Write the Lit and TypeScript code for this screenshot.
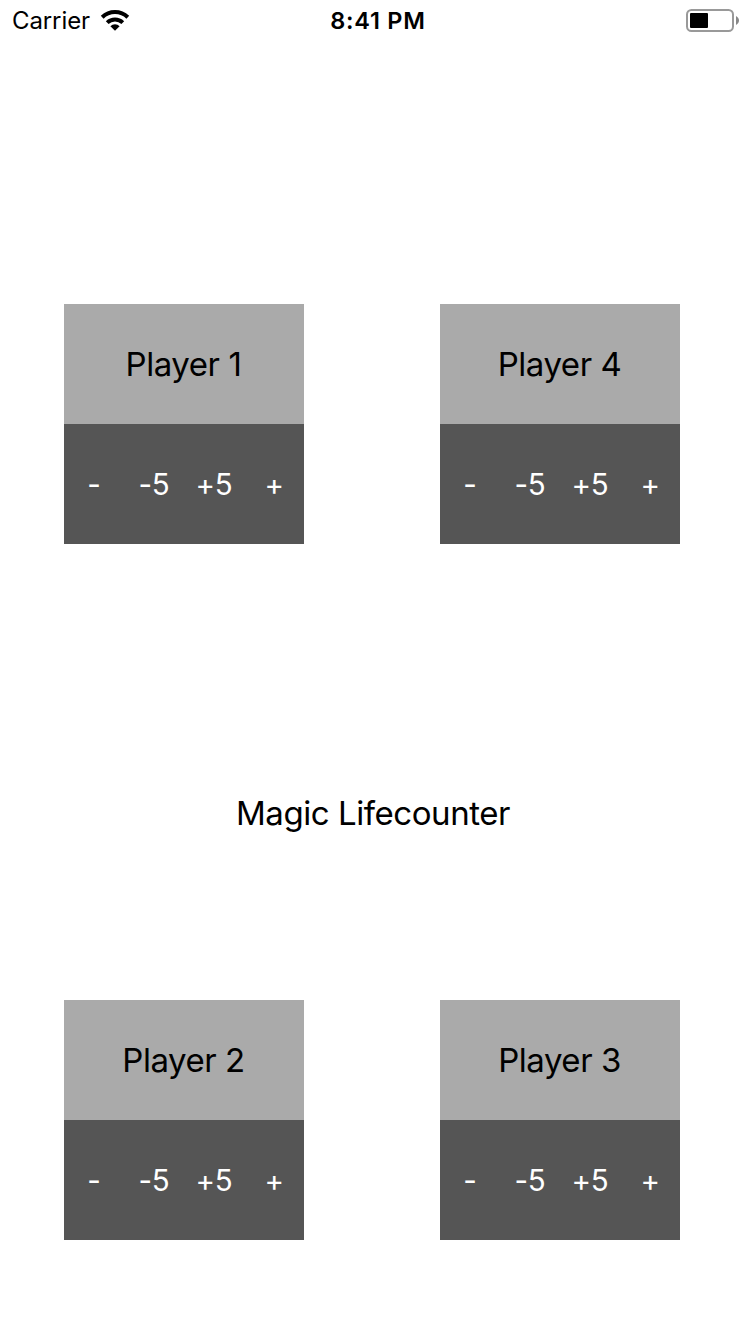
import { LitElement, html, css } from "lit";
import { customElement, property } from "lit/decorators.js";

@customElement("status-bar")
class StatusBar extends LitElement {
  static styles = css`
    :host { display: grid; grid-template-columns: 1fr auto 1fr; height: 41px; align-items: center; color: #000; }
    .left { display: flex; align-items: center; padding-left: 12px; gap: 10px; font-size: 24px; letter-spacing: -0.1px; }
    .time { font-size: 23.5px; font-weight: 590; letter-spacing: 0.75px; padding-left: 6px; }
    .right { display: flex; justify-content: flex-end; padding-right: 10px; }
    svg { display: block; }
  `;
  render() {
    return html`
      <div class="left"><span>Carrier</span>
        <svg width="30" height="22" viewBox="0 0 30 22"><g fill="none" stroke="#000" stroke-width="4"><path d="M2.2 7.2a18.4 18.4 0 0 1 25.6 0"/><path d="M7.2 12.6a11.4 11.4 0 0 1 15.6 0"/></g><path d="M15 20.700l-4.600-4.500a6.4 6.4 0 0 1 9.200 0z"/></svg>
      </div>
      <div class="time">8:41 PM</div>
      <div class="right"><svg width="54" height="23" viewBox="0 0 54 23"><rect x="1" y="1" width="46" height="21" rx="4.5" fill="none" stroke="#999" stroke-width="2"/><rect x="4" y="4" width="18" height="15" rx="1"/><path d="M50 7c4 2 4 7 0 9z" fill="#888"/></svg></div>`;
  }
}

@customElement("player-card")
class PlayerCard extends LitElement {
  @property() name = "";
  static styles = css`
    :host { display: block; width: 240px; }
    .name { height: 120px; background: #aaa; color: #000; display: flex; align-items: center; justify-content: center; font-size: 33px; letter-spacing: -0.45px; padding-right: 1px; box-sizing: border-box; }
    .controls { height: 120px; background: #555; color: #fff; display: grid; grid-template-columns: repeat(4, 60px); align-items: center; text-align: center; font-size: 29.5px; letter-spacing: -0.3px; font-feature-settings: "calt" 0; }
  `;
  render() {
    return html`<div class="name"><span>${this.name}</span></div>
      <div class="controls">${["-", "-5", "+5", "+"].map((t) => html`<span>${t}</span>`)}</div>`;
  }
}

@customElement("app-root")
class AppRoot extends LitElement {
  static styles = css`
    :host { display: block; height: 1334px; background: #fff; font-family: Inter, "Liberation Sans", sans-serif; overflow: hidden; }
    .row { display: flex; gap: 136px; padding-left: 64px; }
    .top { padding-top: 263px; }
    .title { height: 456px; padding: 82px 4px 0 0; box-sizing: border-box; display: flex; align-items: center; justify-content: center; font-size: 33px; letter-spacing: -0.45px; color: #000; }
  `;
  render() {
    return html`<status-bar></status-bar>
      <div class="row top"><player-card name="Player 1"></player-card><player-card name="Player 4"></player-card></div>
      <div class="title"><span>Magic Lifecounter</span></div>
      <div class="row"><player-card name="Player 2"></player-card><player-card name="Player 3"></player-card></div>`;
  }
}
